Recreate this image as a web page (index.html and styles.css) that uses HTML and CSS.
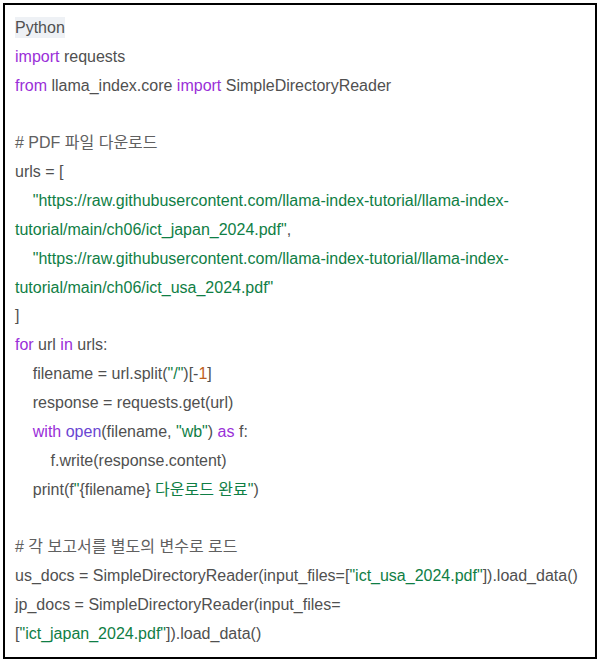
FILE: index.html
```html
<!DOCTYPE html>
<html lang="ko">
<head>
<meta charset="utf-8">
<link rel="stylesheet" href="styles.css">
</head>
<body>
<div class="code">
<div class="line"><span class="lang">Python</span></div>
<div class="line"><span class="kw">import</span> requests</div>
<div class="line"><span class="kw">from</span> llama_index.core <span class="kw">import</span> SimpleDirectoryReader</div>
<div class="line"> </div>
<div class="line"><span class="cm"># PDF 파일 다운로드</span></div>
<div class="line">urls = [</div>
<div class="line">    <span class="st">"https://raw.githubusercontent.com/llama-index-tutorial/llama-index-</span></div>
<div class="line"><span class="st">tutorial/main/ch06/ict_japan_2024.pdf"</span>,</div>
<div class="line">    <span class="st">"https://raw.githubusercontent.com/llama-index-tutorial/llama-index-</span></div>
<div class="line"><span class="st">tutorial/main/ch06/ict_usa_2024.pdf"</span></div>
<div class="line">]</div>
<div class="line"><span class="kw">for</span> url <span class="kw">in</span> urls:</div>
<div class="line">    filename = url.split(<span class="st">"/"</span>)[-<span class="nu">1</span>]</div>
<div class="line">    response = requests.get(url)</div>
<div class="line">    <span class="kw">with</span> <span class="bi">open</span>(filename, <span class="st">"wb"</span>) <span class="kw">as</span> f:</div>
<div class="line">        f.write(response.content)</div>
<div class="line">    print(f<span class="st">"</span>{filename}<span class="st"> 다운로드 완료"</span>)</div>
<div class="line"> </div>
<div class="line"><span class="cm"># 각 보고서를 별도의 변수로 로드</span></div>
<div class="line">us_docs = SimpleDirectoryReader(input_files=[<span class="st">"ict_usa_2024.pdf"</span>]).load_data()</div>
<div class="line">jp_docs = SimpleDirectoryReader(input_files=</div>
<div class="line">[<span class="st">"ict_japan_2024.pdf"</span>]).load_data()</div>
</div>
</body>
</html>
```

FILE: styles.css
```css
html, body {
  margin: 0;
  padding: 0;
  background: #ffffff;
}

body {
  padding: 3px;
  width: 594px;
  height: 656px;
}

.code {
  box-sizing: border-box;
  width: 594px;
  height: 656px;
  border: 2px solid #000000;
  padding: 9px 10px 9px 10px;
  font-family: "Liberation Sans", Arial, "Noto Sans CJK KR", sans-serif;
  font-size: 16px;
  line-height: 28.85px;
  color: #505050;
}

.line {
  white-space: pre;
  height: 28.85px;
}

.lang {
  background: #eef1f5;
  padding: 2px 0;
}

.kw {
  color: #9a2fd8;
}

.bi {
  color: #6a45d2;
}

.st {
  color: #0f7e45;
}

.nu {
  color: #c0601c;
}

.cm {
  color: #606060;
}
```
